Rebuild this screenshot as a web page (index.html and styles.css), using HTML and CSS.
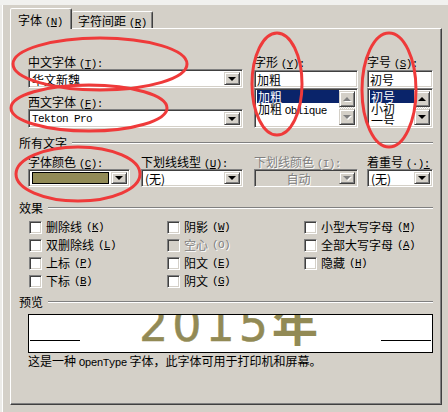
FILE: index.html
```html
<!DOCTYPE html>
<html>
  <head>
    <meta charset="utf-8">
    <title>字体</title>
    <link rel="stylesheet" href="styles.css">
  </head>
  <body>
    <div class="topstrip"></div>
    <div class="dialog">
      <div class="tabs">
        <div class="tab active">字体 <span class="lat">(<u>N</u>)</span></div>
        <div class="tab">字符间距 <span class="lat">(<u>R</u>)</span></div>
      </div>
      <div class="panel">
        <div class="fonts">
          <div class="col-main">
            <div class="label">中文字体 <span class="lat">(<u>T</u>):</span></div>
            <div class="combo">
              <span class="value">华文新魏</span>
              <span class="btn"><i class="arrow"></i></span>
            </div>
            <div class="label second">西文字体 <span class="lat">(<u>F</u>):</span></div>
            <div class="combo">
              <span class="value lat">Tekton Pro</span>
              <span class="btn"><i class="arrow"></i></span>
            </div>
          </div>
          <div class="col-style">
            <div class="label">字形 <span class="lat">(<u>Y</u>):</span></div>
            <div class="field">加粗</div>
            <div class="list">
              <div class="items">
                <div class="item selected">加粗</div>
                <div class="item">加粗 <span class="lat">Oblique</span></div>
              </div>
              <div class="scrollbar">
                <span class="btn"><i class="arrow up off"></i></span>
                <span class="track"></span>
                <span class="btn"><i class="arrow off"></i></span>
              </div>
            </div>
          </div>
          <div class="col-size">
            <div class="label">字号 <span class="lat">(<u>S</u>):</span></div>
            <div class="field">初号</div>
            <div class="list">
              <div class="items">
                <div class="item selected">初号</div>
                <div class="item">小初</div>
                <div class="item">一号</div>
              </div>
              <div class="scrollbar">
                <span class="btn"><i class="arrow up"></i></span>
                <span class="track"></span>
                <span class="btn"><i class="arrow"></i></span>
              </div>
            </div>
          </div>
        </div>

        <div class="group first">所有文字</div>
        <div class="attrs">
          <div class="c1">
            <div class="label">字体颜色 <span class="lat">(<u>C</u>):</span></div>
            <div class="combo">
              <span class="swatch"></span>
              <span class="btn"><i class="arrow"></i></span>
            </div>
          </div>
          <div class="c2">
            <div class="label">下划线线型 <span class="lat">(<u>U</u>):</span></div>
            <div class="combo">
              <span class="value">(无)</span>
              <span class="btn"><i class="arrow"></i></span>
            </div>
          </div>
          <div class="c3">
            <div class="label off">下划线颜色 <span class="lat">(I):</span></div>
            <div class="combo off">
              <span class="value">自动</span>
              <span class="btn"><i class="arrow off"></i></span>
            </div>
          </div>
          <div class="c4">
            <div class="label">着重号 <span class="lat">(·)<u>:</u></span></div>
            <div class="combo">
              <span class="value">(无)</span>
              <span class="btn"><i class="arrow"></i></span>
            </div>
          </div>
        </div>

        <div class="group">效果</div>
        <div class="effects">
          <div class="opt"><span class="check"></span>删除线 <span class="lat">(<u>K</u>)</span></div>
          <div class="opt"><span class="check"></span>双删除线 <span class="lat">(<u>L</u>)</span></div>
          <div class="opt"><span class="check"></span>上标 <span class="lat">(<u>P</u>)</span></div>
          <div class="opt"><span class="check"></span>下标 <span class="lat">(<u>B</u>)</span></div>
          <div class="opt"><span class="check"></span>阴影 <span class="lat">(<u>W</u>)</span></div>
          <div class="opt off"><span class="check"></span>空心 <span class="lat">(O)</span></div>
          <div class="opt"><span class="check"></span>阳文 <span class="lat">(<u>E</u>)</span></div>
          <div class="opt"><span class="check"></span>阴文 <span class="lat">(<u>G</u>)</span></div>
          <div class="opt"><span class="check"></span>小型大写字母 <span class="lat">(<u>M</u>)</span></div>
          <div class="opt"><span class="check"></span>全部大写字母 <span class="lat">(<u>A</u>)</span></div>
          <div class="opt"><span class="check"></span>隐藏 <span class="lat">(<u>H</u>)</span></div>
        </div>

        <div class="group">预览</div>
        <div class="preview">
          <span class="rule"></span>
          <span class="sample">2015<span class="cjk">年</span></span>
          <span class="rule"></span>
        </div>
        <div class="caption">这是一种 <span class="lat">OpenType</span> 字体，此字体可用于打印机和屏幕。</div>
      </div>
    </div>

    <svg class="marks" width="448" height="412" viewBox="0 0 448 412">
      <g fill="none" stroke="#ef3a3a" stroke-width="3">
        <ellipse cx="100" cy="64" rx="87" ry="26"/>
        <ellipse cx="89" cy="108" rx="78" ry="23"/>
        <ellipse cx="277" cy="84" rx="25" ry="51"/>
        <ellipse cx="389" cy="90" rx="27" ry="57"/>
        <ellipse cx="78" cy="174" rx="62" ry="27"/>
      </g>
    </svg>
  </body>
</html>
```

FILE: styles.css
```css
* {
  box-sizing: border-box;
}

body {
  margin: 0;
  width: 448px;
  height: 412px;
  overflow: hidden;
  position: relative;
  background: #d4d0c8;
  font-family: "Noto Sans CJK SC", sans-serif;
  font-size: 12px;
  line-height: 14px;
  color: #000;
}

u {
  text-underline-offset: 1px;
}

.lat {
  font-family: "Liberation Mono", monospace;
  font-size: 11px;
  letter-spacing: -0.6px;
}

.topstrip {
  height: 5px;
  background: #f1f1ef;
}

.dialog {
  height: 407px;
  padding-left: 8px;
  border-left: 2px solid #ecebe8;
  box-shadow: inset 1px 0 #fff;
}

/* tabs */
.tabs {
  display: flex;
  align-items: flex-end;
  height: 23px;
}

.tab {
  position: relative;
  background: #d4d0c8;
  border: 1px solid;
  border-bottom: 0;
  border-color: #fff #404040 transparent #fff;
  border-radius: 2px 2px 0 0;
  box-shadow: inset -1px 0 #808080;
  white-space: nowrap;
}

.tab.active {
  width: 62px;
  height: 21px;
  margin-bottom: -1px;
  padding: 4px 0 0 7px;
  z-index: 1;
}

.tab:not(.active) {
  width: 81px;
  height: 17px;
  border-left: 0;
  padding: 2px 0 0 6px;
}

.panel {
  width: 432px;
  height: 377px;
  padding: 26px 8px 0 8px;
  border: 1px solid;
  border-color: #fff #404040 #404040 #fff;
  box-shadow: inset -1px -1px #808080;
}

/* shared control look */
.label {
  height: 14px;
  white-space: nowrap;
}

.label.off,
.combo.off .value,
.opt.off {
  color: #808080;
  text-shadow: 1px 1px 0 #fff;
}

.combo,
.field,
.list,
.check {
  background: #fff;
  border: 1px solid;
  border-color: #808080 #fff #fff #808080;
  box-shadow: inset 1px 1px #404040, inset -1px -1px #d4d0c8;
}

.combo {
  display: flex;
  height: 19px;
  padding: 2px;
}

.combo .value {
  flex: 1;
  padding-left: 1px;
  line-height: 15px;
  white-space: nowrap;
}

.combo.off {
  background: #d4d0c8;
}

.combo.off .value {
  text-align: center;
}

.btn {
  display: flex;
  align-items: center;
  justify-content: center;
  width: 16px;
  flex: none;
  background: #d4d0c8;
  border: 1px solid;
  border-color: #d4d0c8 #404040 #404040 #d4d0c8;
  box-shadow: inset 1px 1px #fff, inset -1px -1px #808080;
}

.arrow {
  width: 0;
  height: 0;
  border-left: 4px solid transparent;
  border-right: 4px solid transparent;
  border-top: 4px solid #000;
}

.arrow.up {
  border-top: 0;
  border-bottom: 4px solid #000;
}

.arrow.off {
  border-top-color: #808080;
  filter: drop-shadow(1px 1px 0 #fff);
}

.arrow.up.off {
  border-bottom-color: #808080;
}

.field {
  height: 18px;
  margin-top: 1px;
  padding: 2px 2px 0;
  line-height: 14px;
}

.list {
  display: flex;
  height: 40px;
  padding: 2px;
}

.items {
  flex: 1;
  margin-top: -1px;
  overflow: hidden;
}

.item {
  height: 12px;
  padding-left: 1px;
  line-height: 12px;
  white-space: nowrap;
}

.item.selected {
  height: 13px;
  line-height: 13px;
  background: #0a246a;
  color: #fff;
}

.scrollbar {
  display: flex;
  flex-direction: column;
  width: 16px;
}

.scrollbar .btn {
  height: 16px;
}

.track {
  flex: 1;
  background: repeating-conic-gradient(#fff 0 25%, #d4d0c8 0 50%) 0 0 / 2px 2px;
}

/* font pickers */
.fonts {
  display: flex;
  padding-left: 9px;
}

.col-main {
  width: 215px;
  margin-right: 11px;
}

.col-main .label.second {
  margin-top: 7px;
}

.col-style {
  width: 104px;
  margin-right: 9px;
}

.col-size {
  width: 66px;
}

/* group headings */
.group {
  display: flex;
  align-items: center;
  height: 14px;
  margin-top: 14px;
}

.group.first {
  margin-top: 8px;
}

.group::after {
  content: "";
  flex: 1;
  margin-left: 5px;
  border-top: 1px solid #808080;
  border-bottom: 1px solid #fff;
}

.attrs {
  display: flex;
  margin-top: 5px;
  padding-left: 9px;
}

.attrs .combo {
  height: 18px;
}

.attrs .combo .value {
  line-height: 14px;
}

.c1 {
  width: 102px;
  margin-right: 11px;
}

.c2 {
  width: 102px;
  margin-right: 11px;
}

.c3 {
  width: 104px;
  margin-right: 9px;
}

.c4 {
  width: 66px;
}

.swatch {
  flex: 1;
  margin: 0 2px 0 1px;
  border: 1px solid #000;
  background: #928b57;
}

/* effects */
.effects {
  display: grid;
  grid-template-columns: 138px 137px 1fr;
  grid-template-rows: repeat(4, 18px);
  grid-auto-flow: column;
  margin-top: 3px;
  padding-left: 10px;
}

.effects + .group {
  margin-top: 5px;
}

.opt {
  display: flex;
  align-items: center;
  gap: 4px;
  white-space: nowrap;
}

.check {
  width: 13px;
  height: 13px;
  flex: none;
}

.opt.off .check {
  background: #d4d0c8;
}

/* preview */
.preview {
  display: flex;
  align-items: baseline;
  justify-content: space-between;
  height: 39px;
  margin: 5px 0 0 9px;
  padding: 0 1px;
  background: #fff;
  border: 1px solid #000;
  overflow: hidden;
}

.rule {
  width: 50px;
  height: 1px;
  background: #000;
}

.sample {
  font-family: "DejaVu Sans", "Noto Sans CJK SC", sans-serif;
  font-size: 46px;
  line-height: 20px;
  letter-spacing: 4px;
  color: #928a55;
  -webkit-text-stroke: 0.5px #928a55;
}

.sample .cjk {
  font-family: "Noto Sans CJK SC", sans-serif;
  font-weight: bold;
  line-height: 10px;
  -webkit-text-stroke: 0;
}

.caption {
  margin: 1px 0 0 9px;
}

.marks {
  position: absolute;
  left: 0;
  top: 0;
  pointer-events: none;
}
```
